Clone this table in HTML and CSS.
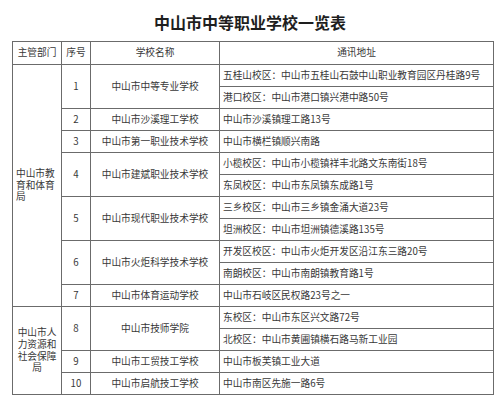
FILE: index.html
```html
<!DOCTYPE html>
<html lang="zh-CN">
<head>
<meta charset="utf-8">
<title>中山市中等职业学校一览表</title>
<link rel="stylesheet" href="styles.css">
</head>
<body>
<h1 class="title">中山市中等职业学校一览表</h1>
<table class="schools">
  <colgroup>
    <col class="c-dept"><col class="c-no"><col class="c-name"><col class="c-addr">
  </colgroup>
  <thead>
    <tr class="head">
      <th>主管部门</th><th>序号</th><th>学校名称</th><th>通讯地址</th>
    </tr>
  </thead>
  <tbody>
    <tr>
      <td class="dept dept-left" rowspan="11">中山市教育和体育局</td>
      <td class="no" rowspan="2">1</td>
      <td class="name" rowspan="2">中山市中等专业学校</td>
      <td class="addr">五桂山校区：中山市五桂山石鼓中山职业教育园区丹桂路9号</td>
    </tr>
    <tr><td class="addr">港口校区：中山市港口镇兴港中路50号</td></tr>
    <tr>
      <td class="no">2</td><td class="name">中山市沙溪理工学校</td>
      <td class="addr">中山市沙溪镇理工路13号</td>
    </tr>
    <tr>
      <td class="no">3</td><td class="name">中山市第一职业技术学校</td>
      <td class="addr">中山市横栏镇顺兴南路</td>
    </tr>
    <tr>
      <td class="no" rowspan="2">4</td><td class="name" rowspan="2">中山市建斌职业技术学校</td>
      <td class="addr">小榄校区：中山市小榄镇祥丰北路文东南街18号</td>
    </tr>
    <tr><td class="addr">东凤校区：中山市东凤镇东成路1号</td></tr>
    <tr>
      <td class="no" rowspan="2">5</td><td class="name" rowspan="2">中山市现代职业技术学校</td>
      <td class="addr">三乡校区：中山市三乡镇金涌大道23号</td>
    </tr>
    <tr><td class="addr">坦洲校区：中山市坦洲镇德溪路135号</td></tr>
    <tr>
      <td class="no" rowspan="2">6</td><td class="name" rowspan="2">中山市火炬科学技术学校</td>
      <td class="addr">开发区校区：中山市火炬开发区沿江东三路20号</td>
    </tr>
    <tr><td class="addr">南朗校区：中山市南朗镇教育路1号</td></tr>
    <tr>
      <td class="no">7</td><td class="name">中山市体育运动学校</td>
      <td class="addr">中山市石岐区民权路23号之一</td>
    </tr>
    <tr>
      <td class="dept dept-center" rowspan="4">中山市人力资源和社会保障局</td>
      <td class="no" rowspan="2">8</td><td class="name" rowspan="2">中山市技师学院</td>
      <td class="addr">东校区：中山市东区兴文路72号</td>
    </tr>
    <tr><td class="addr">北校区：中山市黄圃镇横石路马新工业园</td></tr>
    <tr>
      <td class="no">9</td><td class="name">中山市工贸技工学校</td>
      <td class="addr">中山市板芙镇工业大道</td>
    </tr>
    <tr>
      <td class="no">10</td><td class="name">中山市启航技工学校</td>
      <td class="addr">中山市南区先施一路6号</td>
    </tr>
  </tbody>
</table>
</body>
</html>
```
FILE: styles.css
```css
html, body {
  margin: 0;
  padding: 0;
  background: #ffffff;
}
body {
  font-family: "Noto Sans CJK SC", "Noto Sans", sans-serif;
  color: #383838;
  width: 500px;
  height: 404px;
  overflow: hidden;
}
.title {
  margin: 0;
  height: 41px;
  display: flex;
  align-items: center;
  justify-content: center;
  font-size: 16px;
  font-weight: 700;
  color: #1e1e1e;
  padding-top: 2px;
  box-sizing: border-box;
}
.schools {
  margin-left: 12px;
  width: 481px;
  border-collapse: collapse;
  table-layout: fixed;
  font-size: 9.7px;
  line-height: 11.8px;
}
.c-dept { width: 49px; }
.c-no { width: 29px; }
.c-name { width: 129px; }
.c-addr { width: 274px; }
.schools th,
.schools td {
  border: 1px solid #6b6b6b;
  padding: 0 3px;
  height: 21px;
  font-weight: 400;
  vertical-align: middle;
  white-space: nowrap;
}
.schools .head th {
  height: 22px;
  text-align: center;
}
.no, .name { text-align: center; }
.addr { text-align: left; }
.schools td.dept {
  white-space: normal;
  word-break: break-all;
}
.dept-left { text-align: left; }
.dept-center { text-align: center; }
```
